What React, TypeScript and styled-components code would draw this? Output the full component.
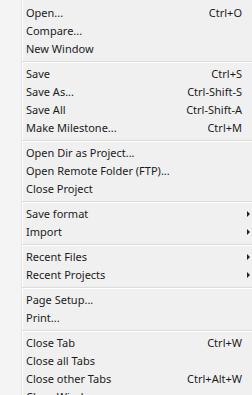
import React from "react";
import styled, { createGlobalStyle } from "styled-components";

const Global = createGlobalStyle`
  html, body { margin: 0; padding: 0; background: #f0f0f0; }
  #root { height: 395px; overflow: hidden; }
`;

const Menu = styled.ul`
  list-style: none;
  margin: 0;
  padding: 4px 0 0 0;
  width: 252px;
  min-height: 395px;
  box-sizing: border-box;
  background: linear-gradient(
    to right,
    #f4f4f4 0 21px,
    #e4e4e4 21px 22px,
    #ffffff 22px 23px,
    #f0f0f0 23px
  );
  font-family: "Noto Sans", "Open Sans", sans-serif;
  font-size: 11px;
  color: #1b1b1b;
`;

const Row = styled.li`
  display: grid;
  grid-template-columns: 1fr auto 10px;
  align-items: center;
  height: 18px;
  padding-left: 26px;
  white-space: nowrap;
  cursor: default;
`;

const Label = styled.span`
  line-height: 18px;
`;

const Shortcut = styled.span`
  line-height: 18px;
  text-align: right;
`;

const Arrow = styled.span`
  justify-self: start;
  margin-left: 5px;
  width: 0;
  height: 0;
  border-top: 3px solid transparent;
  border-bottom: 3px solid transparent;
  border-left: 3px solid #222;
`;

const Separator = styled.li`
  height: 1px;
  margin: 3px 0 2px 22px;
  background: #dcdcdc;
  border-bottom: 1px solid #ffffff;
`;

type Item =
  | { sep: true }
  | { label: string; shortcut?: string; sub?: boolean; sep?: false };

const items: Item[] = [
  { label: "Open...", shortcut: "Ctrl+O" },
  { label: "Compare..." },
  { label: "New Window" },
  { sep: true },
  { label: "Save", shortcut: "Ctrl+S" },
  { label: "Save As...", shortcut: "Ctrl-Shift-S" },
  { label: "Save All", shortcut: "Ctrl-Shift-A" },
  { label: "Make Milestone...", shortcut: "Ctrl+M" },
  { sep: true },
  { label: "Open Dir as Project..." },
  { label: "Open Remote Folder (FTP)..." },
  { label: "Close Project" },
  { sep: true },
  { label: "Save format", sub: true },
  { label: "Import", sub: true },
  { sep: true },
  { label: "Recent Files", sub: true },
  { label: "Recent Projects", sub: true },
  { sep: true },
  { label: "Page Setup..." },
  { label: "Print..." },
  { sep: true },
  { label: "Close Tab", shortcut: "Ctrl+W" },
  { label: "Close all Tabs" },
  { label: "Close other Tabs", shortcut: "Ctrl+Alt+W" },
  { label: "Close Window" },
];

export default function App() {
  return (
    <>
      <Global />
      <Menu>
        {items.map((it, i) =>
          it.sep ? (
            <Separator key={i} />
          ) : (
            <Row key={i}>
              <Label>{it.label}</Label>
              <Shortcut>{it.shortcut ?? ""}</Shortcut>
              {it.sub ? <Arrow /> : <span />}
            </Row>
          )
        )}
      </Menu>
    </>
  );
}
